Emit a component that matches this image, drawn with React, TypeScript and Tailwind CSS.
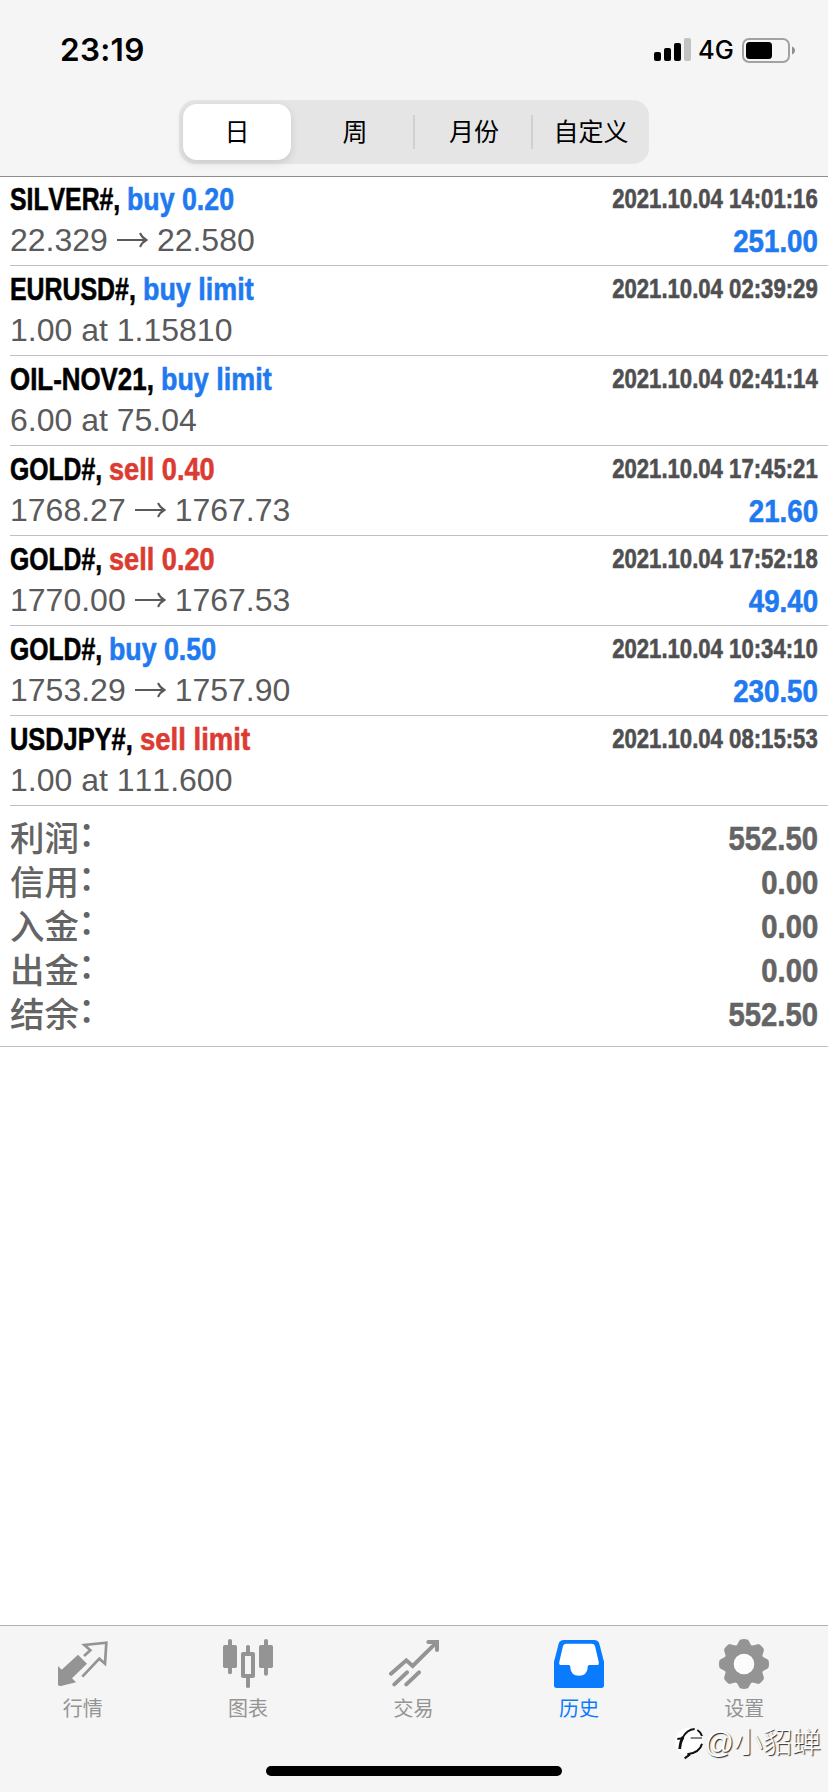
import React, { useLayoutEffect, useRef, useState } from 'react';

interface Deal {
  symbol: string;
  symbolWidth: number;
  type: 'buy' | 'sell';
  action: string;
  actionWidth: number;
  from: string;
  to?: string;
  time: string;
  profit?: string;
}

const deals: Deal[] = [
  { symbol: 'SILVER#,', symbolWidth: 110, type: 'buy', action: 'buy 0.20', actionWidth: 107, from: '22.329', to: '22.580', time: '2021.10.04 14:01:16', profit: '251.00' },
  { symbol: 'EURUSD#,', symbolWidth: 126, type: 'buy', action: 'buy limit', actionWidth: 111, from: '1.00 at 1.15810', time: '2021.10.04 02:39:29' },
  { symbol: 'OIL-NOV21,', symbolWidth: 144, type: 'buy', action: 'buy limit', actionWidth: 111, from: '6.00 at 75.04', time: '2021.10.04 02:41:14' },
  { symbol: 'GOLD#,', symbolWidth: 92, type: 'sell', action: 'sell 0.40', actionWidth: 106, from: '1768.27', to: '1767.73', time: '2021.10.04 17:45:21', profit: '21.60' },
  { symbol: 'GOLD#,', symbolWidth: 92, type: 'sell', action: 'sell 0.20', actionWidth: 106, from: '1770.00', to: '1767.53', time: '2021.10.04 17:52:18', profit: '49.40' },
  { symbol: 'GOLD#,', symbolWidth: 92, type: 'buy', action: 'buy 0.50', actionWidth: 107, from: '1753.29', to: '1757.90', time: '2021.10.04 10:34:10', profit: '230.50' },
  { symbol: 'USDJPY#,', symbolWidth: 123, type: 'sell', action: 'sell limit', actionWidth: 110, from: '1.00 at 111.600', time: '2021.10.04 08:15:53' },
];

const totals = [
  { label: '利润', value: '552.50' },
  { label: '信用', value: '0.00' },
  { label: '入金', value: '0.00' },
  { label: '出金', value: '0.00' },
  { label: '结余', value: '552.50' },
];

// Squeezes the text horizontally so that it takes the given width
const Condensed: React.FC<{ width: number; children: React.ReactNode }> = ({ width, children }) => {
  const ref = useRef<HTMLSpanElement>(null);
  const [scale, setScale] = useState<number>(1);

  useLayoutEffect(() => {
    if (ref.current) {
      setScale(width / ref.current.offsetWidth);
    }
  }, [width]);

  return (
    <span className="flex" style={{ width }}>
      <span ref={ref} className="shrink-0 origin-left whitespace-pre" style={{ transform: `scaleX(${scale})` }}>
        {children}
      </span>
    </span>
  );
};

const StatusBar: React.FC = () => (
  <div className="flex h-[100px] items-center justify-between pl-[60px] pr-[33px]">
    <span className="text-[31.5px] leading-none font-semibold tracking-[0.3px] text-black font-['Inter',sans-serif]">23:19</span>
    <div className="flex items-center">
      <svg width="38" height="24" viewBox="0 0 38 24">
        <rect x="0" y="14" width="7" height="9" rx="2" />
        <rect x="10" y="10" width="7" height="13" rx="2" />
        <rect x="20" y="5" width="7" height="18" rx="2" />
        <rect x="30" y="0" width="7" height="23" rx="2" fill="#c2c2c2" />
      </svg>
      <span className="ml-[6px] w-[37px] text-[25.5px] leading-none font-medium text-black font-['Inter',sans-serif]">4G</span>
      <svg className="ml-[7px]" width="53" height="25" viewBox="0 0 53 25">
        <rect x="1" y="1" width="46" height="23" rx="6" fill="none" stroke="#a2a2a2" strokeWidth="2" />
        <rect x="4" y="4" width="26" height="17" rx="3.5" />
        <path d="M50 8.5c2 .8 3 2.2 3 4s-1 3.200-3 4z" fill="#8f8f8f" />
      </svg>
    </div>
  </div>
);

const PeriodTabs: React.FC = () => (
  <div className="mx-auto flex h-[64px] w-[470px] rounded-[16px] bg-[#e5e5e6] p-[4px] text-[25px] text-black">
    <div className="flex w-[108px] items-center justify-center rounded-[14px] bg-white pt-[2px] shadow-[0_3px_8px_rgba(0,0,0,0.12)]">日</div>
    <div className="flex w-[122px] items-center justify-center pt-[2px] pl-[6px]">周</div>
    <div className="my-auto h-[34px] w-[2px] bg-[#d0d0d2]" />
    <div className="flex w-[116px] items-center justify-center pt-[2px] pl-[2px]">月份</div>
    <div className="my-auto h-[34px] w-[2px] bg-[#d0d0d2]" />
    <div className="flex flex-1 items-center justify-center pt-[2px] pl-[4px]">自定义</div>
  </div>
);

const DealRow: React.FC<{ deal: Deal }> = ({ deal }) => (
  <div className="ml-[10px] h-[90px] border-b border-[#c0c0c2] pt-[5px] pr-[10px]">
    <div className="flex h-[41px] justify-between font-bold [-webkit-text-stroke:0.6px]">
      <div className="flex gap-[7px] text-[32px] leading-[36px] text-black">
        <Condensed width={deal.symbolWidth}>{deal.symbol}</Condensed>
        <div className={deal.type === 'buy' ? 'text-[#1f7af0]' : 'text-[#dc3b31]'}>
          <Condensed width={deal.actionWidth}>{deal.action}</Condensed>
        </div>
      </div>
      <div className="origin-right scale-x-[0.82] text-[27px] leading-[36px] text-[#4f4f51]">{deal.time}</div>
    </div>
    <div className="flex justify-between">
      <div className="flex text-[32px] leading-[36px] text-[#5a5a5c]">
        {deal.from}
        {deal.to && (
          <>
            <svg className="mx-[9px] mt-[9px]" width="31" height="18" viewBox="0 0 31 18" fill="none" stroke="currentColor" strokeWidth="2">
              <path d="M0 9h29M23 2c1.500 3.500 3.500 5.500 6.500 7c-3 1.500-5 3.500-6.500 7" />
            </svg>
            {deal.to}
          </>
        )}
      </div>
      <div className="origin-right scale-x-[0.865] text-[32px] leading-[38px] font-bold text-[#1f7af0] [-webkit-text-stroke:0.6px]">
        {deal.profit}
      </div>
    </div>
  </div>
);

const QuotesIcon = () => (
  <svg width="50" height="50" viewBox="0 0 150 150">
    <path fill="currentColor" d="M0 81l11 11 49-45 27 27-45 44 12 12-42 10.500q-12 2-12-4z" />
    <path fill="none" stroke="currentColor" strokeWidth="8" d="M78 51l19-17-18-16 66-7-4 63-17-15-51 54" />
  </svg>
);

const ChartIcon = () => (
  <svg width="50" height="50" viewBox="0 0 150 150" fill="currentColor">
    <rect x="15" y="0" width="12" height="106" rx="6" />
    <rect x="0" y="18" width="42" height="69" rx="5" />
    <rect x="69" y="18" width="12" height="28" rx="5" />
    <rect x="69" y="110" width="12" height="37" rx="5" />
    <rect x="60" y="45" width="30" height="66" fill="none" stroke="currentColor" strokeWidth="12" strokeLinejoin="round" />
    <rect x="123" y="0" width="12" height="110" rx="6" />
    <rect x="108" y="18" width="42" height="69" rx="5" />
  </svg>
);

const TradeIcon = () => (
  <svg width="50" height="50" viewBox="0 0 150 150" fill="none" stroke="currentColor" strokeWidth="12" strokeLinecap="round">
    <path d="M6 104l46-40 19 17L142 11M16 136l38-36M52 136l38-36" />
    <path d="M118 9h26v24" />
    <path fill="currentColor" stroke="none" d="M128 6h22v26z" />
  </svg>
);

const HistoryIcon = () => (
  <svg width="50" height="50" viewBox="0 0 150 150">
    <path fill="currentColor" d="M30 3h90q13 0 16 11l14 54v71q0 8-8 8H8q-8 0-8-8V68l14-54q3-11 16-11z" />
    <path fill="#fff" d="M37 14h76q8 0 10 7l11 47q2 10-5 10h-23q-5 0-5 5c0 17-10 27-26 27s-26-10-26-27q0-5-5-5H21q-7 0-5-10l11-47q2-7 10-7z" />
  </svg>
);

const SettingsIcon = () => (
  <svg width="50" height="50" viewBox="0 0 150 150">
    <circle cx="75" cy="75" r="45" fill="none" stroke="currentColor" strokeWidth="30" />
    <g fill="currentColor" stroke="currentColor" strokeWidth="12" strokeLinejoin="round">
      {[0, 45, 90, 135, 180, 225, 270, 315].map(angle => (
        <path key={angle} d="M58 23l9-16q8-2 16 0l9 16z" transform={`rotate(${angle} 75 75)`} />
      ))}
    </g>
    <circle cx="75" cy="75" r="31" fill="#fcfcfc" />
  </svg>
);

const navItems = [
  { label: '行情', icon: <QuotesIcon /> },
  { label: '图表', icon: <ChartIcon /> },
  { label: '交易', icon: <TradeIcon /> },
  { label: '历史', icon: <HistoryIcon />, active: true },
  { label: '设置', icon: <SettingsIcon /> },
];

const App: React.FC = () => {
  return (
    <div className="relative flex h-[1792px] w-[828px] flex-col overflow-hidden bg-white font-['Liberation_Sans','Noto_Sans_CJK_SC',sans-serif] [font-kerning:none]">
      <header className="h-[177px] border-b border-[#8e8e90] bg-[#f5f5f5]">
        <StatusBar />
        <PeriodTabs />
      </header>

      <main className="flex-1">
        <div className="-mt-px">
          {deals.map((deal, i) => (
            <DealRow key={i} deal={deal} />
          ))}
        </div>
        <div className="h-[241px] border-b border-[#c0c0c2] px-[10px] pt-[10px] text-[#646464]">
          {totals.map(row => (
            <div key={row.label} className="flex h-[44px] items-center justify-between">
              <span className="flex pt-[2px] text-[34.5px] leading-[44px] font-medium">
                {row.label}
                <span className="-mt-[5px] -ml-px">：</span>
              </span>
              <span className="origin-right scale-x-[0.86] text-[34px] leading-[44px] font-bold [-webkit-text-stroke:0.6px]">{row.value}</span>
            </div>
          ))}
        </div>
      </main>

      <nav className="h-[167px] border-t border-[#b2b2b2] bg-[#f5f5f5]">
        <div className="flex pt-[13px] pr-px">
          {navItems.map(item => (
            <div key={item.label} className={`flex flex-1 flex-col items-center ${item.active ? 'text-[#0a7aff]' : 'text-[#949494]'}`}>
              {item.icon}
              <span className="mt-[6px] text-[20px] leading-[28px]">{item.label}</span>
            </div>
          ))}
        </div>
        <div className="mx-auto mt-[43px] h-[10px] w-[296px] rounded-full bg-black" />
      </nav>

      {/* Author mark over the tab bar */}
      <div className="absolute top-[1725px] right-[7px] flex items-center">
        <svg width="31" height="36" viewBox="0 0 93 108">
          <circle cx="45" cy="50" r="42" fill="#fff" />
          <g fill="none" stroke="#111">
            <path strokeWidth="8" d="M17 72q2-22 10-36" />
            <path strokeWidth="6" d="M26 38q12-24 36-26M10 42l20-3M70 15q10 6 14 18M84 56q-6 26-44 32M48 88l-16 12" />
            <path strokeWidth="3" d="M50 39h34" />
          </g>
        </svg>
        <span className="text-[29px] leading-[36px] font-light text-white [text-shadow:1px_1px_1px_#222]">@小貂蝉</span>
      </div>
    </div>
  );
};

export default App;
